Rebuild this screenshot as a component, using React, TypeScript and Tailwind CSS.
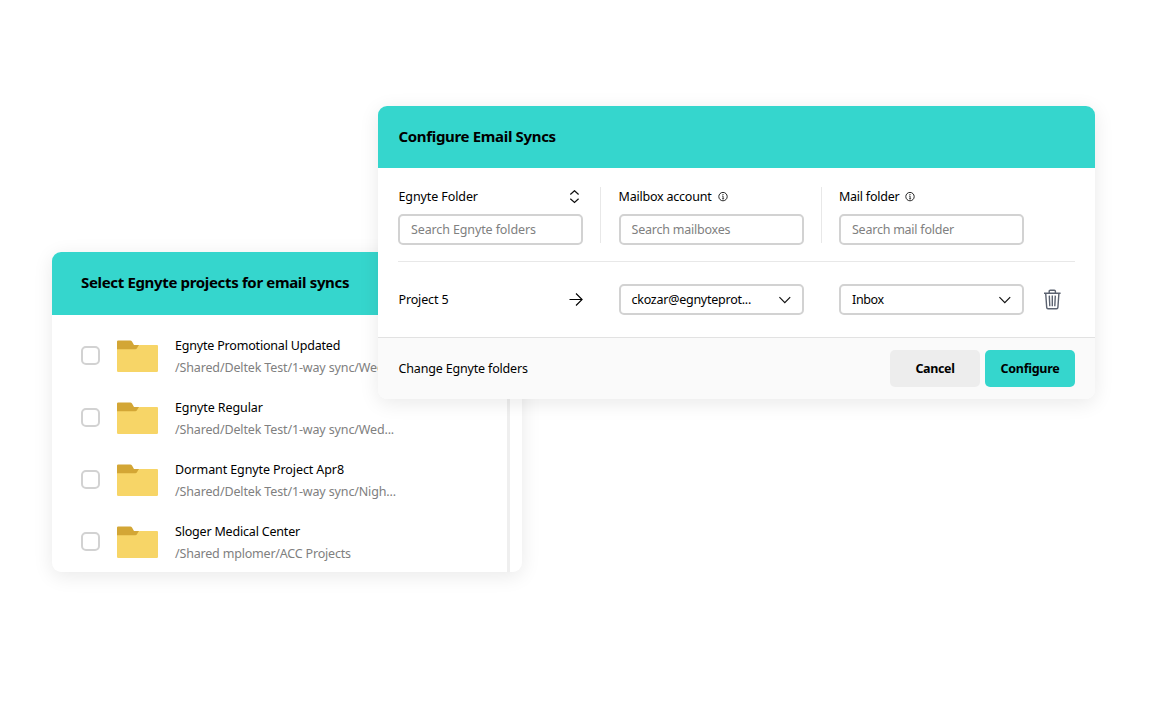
import type { ReactNode } from 'react';

interface Project {
  name: string;
  path: string;
  nameTracking: string;
  pathTracking: string;
}

const projects: Project[] = [
  {
    name: 'Egnyte Promotional Updated',
    path: '/Shared/Deltek Test/1-way sync/Wed...',
    nameTracking: 'tracking-[-0.19px]',
    pathTracking: 'tracking-[-0.14px]',
  },
  {
    name: 'Egnyte Regular',
    path: '/Shared/Deltek Test/1-way sync/Wed...',
    nameTracking: 'tracking-[-0.1px]',
    pathTracking: 'tracking-[-0.14px]',
  },
  {
    name: 'Dormant Egnyte Project Apr8',
    path: '/Shared/Deltek Test/1-way sync/Nigh...',
    nameTracking: 'tracking-[-0.1px]',
    pathTracking: 'tracking-[-0.14px]',
  },
  {
    name: 'Sloger Medical Center',
    path: '/Shared mplomer/ACC Projects',
    nameTracking: 'tracking-[-0.19px]',
    pathTracking: 'tracking-[-0.19px]',
  },
];

function FolderIcon() {
  return (
    <svg width="41" height="32" viewBox="0 0 41 32" className="ml-[17px] shrink-0">
      <path d="M1.2 0.4H13.2Q14.4 0.4 15 1.4L17 4.9H22V14H0V1.6Q0 0.4 1.2 0.4Z" fill="#d3a635" />
      <path
        d="M0 9.3H18.2Q19.4 9.3 20 8.2L21.2 6Q21.8 5 23 5H40Q41 5 41 6V30.8Q41 32 39.8 32H1.2Q0 32 0 30.8Z"
        fill="#f7d567"
      />
    </svg>
  );
}

function InfoIcon() {
  return (
    <svg width="10" height="10" viewBox="0 0 10 10" fill="none" stroke="#111" className="ml-1.5">
      <circle cx="5" cy="4.6" r="4.2" strokeWidth="0.9" />
      <path d="M4.2 4.1H5.1V6.8M4.1 6.8H6.1" strokeWidth="0.8" />
      <circle cx="5" cy="2.6" r="0.6" fill="#111" stroke="none" />
    </svg>
  );
}

function SortIcon() {
  return (
    <svg width="10" height="14" viewBox="0 0 10 14" fill="none" stroke="#111" strokeWidth="1.2">
      <path d="M1.3 4.5L5.5 0.7L9.6 4.5M1.3 8.7L5.5 12.5L9.6 8.7" />
    </svg>
  );
}

function ArrowIcon() {
  return (
    <svg width="14" height="14" viewBox="0 0 14 14" fill="none" stroke="#000" strokeWidth="1.1">
      <path d="M0.5 6.5H13M7 0.5L13.1 6.5L7 12.5" />
    </svg>
  );
}

function ChevronIcon() {
  return (
    <svg width="12" height="8" viewBox="0 0 12 8" fill="none" stroke="#111" strokeWidth="1.2">
      <path d="M0.4 1.1L5.8 6.6L11.2 1.1" />
    </svg>
  );
}

function TrashIcon() {
  return (
    <svg width="17" height="21" viewBox="0 0 17 21" fill="none" stroke="#5b6270" strokeWidth="1.4">
      <path d="M0 4.2H16.6M5.2 4V2.3Q5.2 1.2 6.3 1.2H10.3Q11.4 1.2 11.4 2.3V4" />
      <path d="M1.7 4.4L2.7 18.4Q2.8 19.7 4 19.7H12.6Q13.8 19.7 13.9 18.4L14.9 4.4" />
      <path d="M5.3 6.6L5.8 17.3M8.3 6.6V17.3M11.3 6.6L10.8 17.3" />
    </svg>
  );
}

function SearchBox({ children }: { children: ReactNode }) {
  return (
    <div className="mt-[7px] flex h-[31px] w-[185px] items-center rounded-[5px] border-2 border-[#d2d2d2] bg-white pt-px pl-[11px] text-[#808080]">
      {children}
    </div>
  );
}

function SelectBox({ children }: { children: ReactNode }) {
  return (
    <div className="flex h-[31px] w-[185px] items-center justify-between rounded-[5px] border-2 border-[#d2d2d2] bg-white pr-[11px] pl-[11px]">
      {children}
      <ChevronIcon />
    </div>
  );
}

function ProjectList() {
  return (
    <div className="flex h-[320px] w-[470px] flex-col overflow-hidden rounded-[9px] bg-white shadow-[0_4px_20px_rgba(0,0,0,0.09)]">
      <div className="flex h-[63px] shrink-0 items-center bg-[#35d6cd] pb-[3px] pl-[29px] text-[15px] font-bold">
        <span className="tracking-[-0.34px]">Select Egnyte projects for email syncs</span>
      </div>
      <div className="flex flex-1">
        <div className="flex w-[458px] flex-col border-r-[3px] border-[#efefef] pt-[10px] pl-[29px]">
          {projects.map((project) => (
            <div key={project.name} className="flex h-[62px] shrink-0 items-center">
              <div className="mb-px size-[19px] shrink-0 rounded-[5px] border-2 border-[#d2d2d2]" />
              <FolderIcon />
              <div className="ml-[17px] pt-0.5 leading-[22px] whitespace-nowrap">
                <div className={project.nameTracking}>{project.name}</div>
                <div className={`text-[#808080] ${project.pathTracking}`}>{project.path}</div>
              </div>
            </div>
          ))}
        </div>
      </div>
    </div>
  );
}

function ConfigureDialog() {
  return (
    <div className="absolute top-[106px] left-[378px] flex h-[293px] w-[717px] flex-col overflow-hidden rounded-[9px] bg-white shadow-[0_4px_20px_rgba(0,0,0,0.09)]">
      <div className="flex h-[62px] shrink-0 items-center bg-[#35d6cd] pb-0.5 pl-[20.5px] text-[15px] font-bold">
        <span className="tracking-[-0.33px]">Configure Email Syncs</span>
      </div>

      <div className="mx-5 flex h-[94px] shrink-0 border-b-[1.5px] border-[#e8e8e8] pt-[19px]">
        <div className="w-[185px]">
          <div className="flex h-5 items-center justify-between pr-1 pl-[0.5px]">
            <span className="tracking-[-0.1px]">Egnyte Folder</span>
            <SortIcon />
          </div>
          <SearchBox>
            <span className="tracking-[-0.12px]">Search Egnyte folders</span>
          </SearchBox>
        </div>
        <div className="ml-[17px] h-14 w-px bg-[#e8e8e8]" />
        <div className="ml-[17.5px] w-[185px]">
          <div className="flex h-5 items-center">
            <span className="tracking-[-0.21px]">Mailbox account</span>
            <InfoIcon />
          </div>
          <SearchBox>
            <span className="tracking-[-0.22px]">Search mailboxes</span>
          </SearchBox>
        </div>
        <div className="ml-[17px] h-14 w-px bg-[#e8e8e8]" />
        <div className="ml-[17.5px] w-[185px]">
          <div className="flex h-5 items-center">
            <span className="tracking-[-0.24px]">Mail folder</span>
            <InfoIcon />
          </div>
          <SearchBox>
            <span className="tracking-[-0.24px]">Search mail folder</span>
          </SearchBox>
        </div>
      </div>

      <div className="flex h-[75px] shrink-0 items-center pl-5">
        <div className="flex w-[185px] items-center justify-between pl-[0.5px]">
          <span className="pt-0.5 tracking-[-0.15px]">Project 5</span>
          <ArrowIcon />
        </div>
        <div className="ml-[35.5px]">
          <SelectBox>
            <span className="pt-px tracking-[-0.25px]">ckozar@egnyteprot...</span>
          </SelectBox>
        </div>
        <div className="ml-[35.5px]">
          <SelectBox>
            <span className="pt-px tracking-[-0.35px]">Inbox</span>
          </SelectBox>
        </div>
        <div className="ml-5">
          <TrashIcon />
        </div>
      </div>

      <div className="flex h-[62px] shrink-0 items-center justify-between border-t-[1.5px] border-[#e2e2e2] bg-[#fafafa] pr-5 pl-[20.5px]">
        <span className="pt-px tracking-[-0.17px]">Change Egnyte folders</span>
        <div className="flex gap-[5px] font-bold">
          <div className="flex h-[37px] w-[90px] items-center justify-center rounded-[5px] bg-[#ededed] pt-px">
            <span className="tracking-[-0.35px]">Cancel</span>
          </div>
          <div className="flex h-[37px] w-[90px] items-center justify-center rounded-[5px] bg-[#35d6cd] pt-px">
            <span className="tracking-[-0.29px]">Configure</span>
          </div>
        </div>
      </div>
    </div>
  );
}

export default function App() {
  return (
    <div className="relative h-[720px] w-[1150px] overflow-hidden bg-white pt-[252px] pl-[52px] font-['Noto_Sans',sans-serif] text-[12.5px] text-black">
      <ProjectList />
      <ConfigureDialog />
    </div>
  );
}
